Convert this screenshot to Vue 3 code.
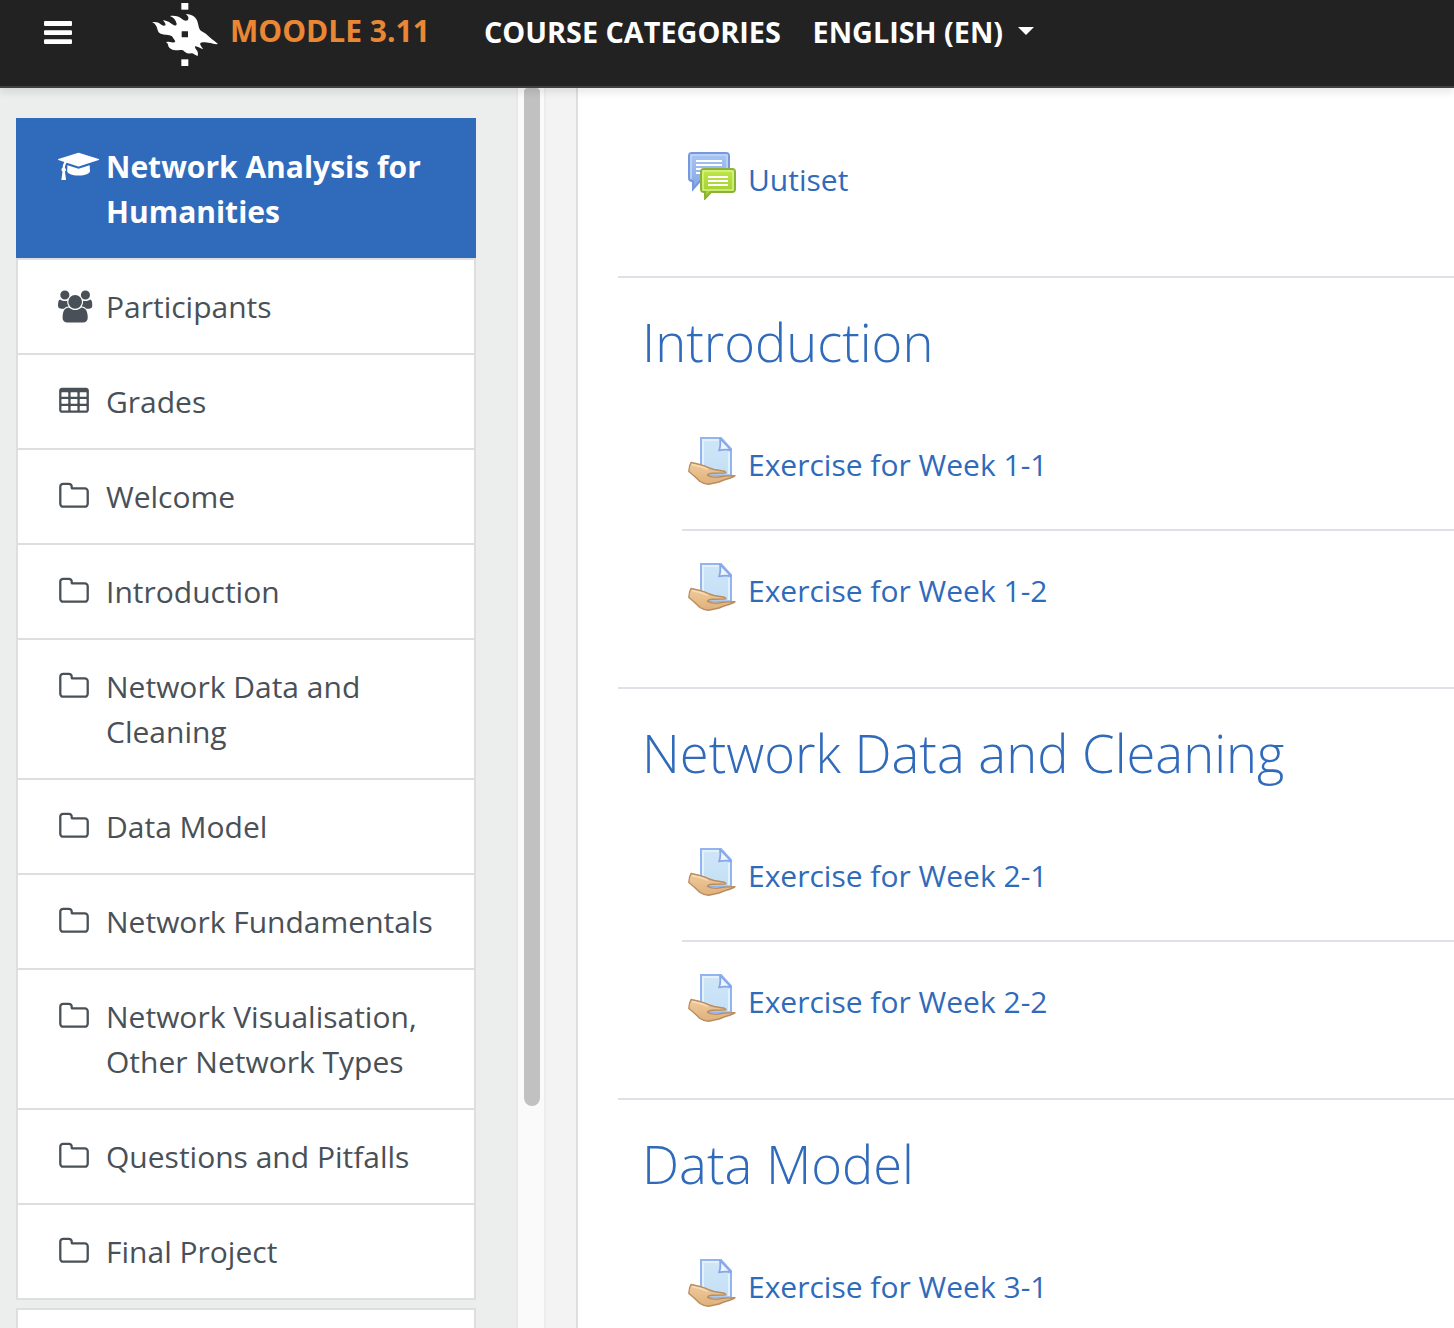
<script setup>
const icons = {
  cap: {
    box: '0 0 2304 1792',
    width: 41.14,
    path: 'M1774 836l18 316q4 69-82 128t-235 93.5-323 34.5-323-34.5-235-93.5-82-128l18-316 574 181q22 7 48 7t48-7zm530-324q0 23-22 31l-1120 352q-4 1-10 1t-10-1l-652-206q-43 34-71 111.5t-34 178.5q63 36 63 109 0 69-58 107l58 433q2 14-8 25-9 11-24 11h-192q-15 0-24-11-10-11-8-25l58-433q-58-38-58-107 0-73 65-111 11-207 98-330l-333-104q-22-8-22-31t22-31l1120-352q4-1 10-1t10 1l1120 352q22 8 22 31z',
  },
  users: {
    box: '64 0 1920 1792',
    width: 34.29,
    path: 'M657 896q-162 5-265 128h-134q-82 0-138-40.5t-56-118.5q0-353 124-353 6 0 43.5 21t97.5 42.5 119 21.5q67 0 133-23-5 37-5 66 0 139 81 256zm1071 637q0 120-73 189.5t-194 69.5h-874q-121 0-194-69.5t-73-189.5q0-53 3.5-103.5t14-109 26.5-108.5 43-97.5 62-81 85.5-53.5 111.5-20q10 0 43 21.5t73 48 107 48 135 21.5 135-21.5 107-48 73-48 43-21.5q61 0 111.5 20t85.5 53.5 62 81 43 97.5 26.5 108.5 14 109 3.5 103.5zm-1024-1277q0 106-75 181t-181 75-181-75-75-181 75-181 181-75 181 75 75 181zm704 384q0 159-112.5 271.5t-271.5 112.5-271.5-112.5-112.5-271.5 112.5-271.5 271.5-112.5 271.5 112.5 112.5 271.5zm576 225q0 78-56 118.5t-138 40.5h-134q-103-123-265-128 81-117 81-256 0-29-5-66 66 23 133 23 59 0 119-21.5t97.5-42.5 43.5-21q124 0 124 353zm-128-609q0 106-75 181t-181 75-181-75-75-181 75-181 181-75 181 75 75 181z',
  },
  table: {
    box: '0 0 1728 1792',
    width: 30.86,
    path: 'M224 128h1344q66 0 113 47t47 113v1088q0 66-47 113t-113 47h-1344q-66 0-113-47t-47-113v-1088q0-66 47-113t113-47z'
      + [192, 704, 1216].flatMap(x => [384, 768, 1152].map(y =>
        `M${x + 32} ${y}h320q32 0 32 32v192q0 32-32 32h-320q-32 0-32-32v-192q0-32 32-32z`)).join(''),
  },
  folder: {
    box: '0 0 1728 1792',
    width: 30.86,
    path: 'M1600 1312v-704q0-40-28-68t-68-28h-704q-40 0-68-28t-28-68v-64q0-40-28-68t-68-28h-320q-40 0-68 28t-28 68v960q0 40 28 68t68 28h1216q40 0 68-28t28-68zm128-704v704q0 92-66 158t-158 66h-1216q-92 0-158-66t-66-158v-960q0-92 66-158t158-66h320q92 0 158 66t66 158v32h672q92 0 158 66t66 158z',
  },
}

const nav = [
  { icon: 'cap', text: 'Network Analysis for Humanities', active: true },
  { icon: 'users', text: 'Participants' },
  { icon: 'table', text: 'Grades' },
  { icon: 'folder', text: 'Welcome' },
  { icon: 'folder', text: 'Introduction' },
  { icon: 'folder', text: 'Network Data and Cleaning' },
  { icon: 'folder', text: 'Data Model' },
  { icon: 'folder', text: 'Network Fundamentals' },
  { icon: 'folder', text: 'Network Visualisation, Other Network Types' },
  { icon: 'folder', text: 'Questions and Pitfalls' },
  { icon: 'folder', text: 'Final Project' },
]

const sections = [
  { title: 'Introduction', items: ['Exercise for Week 1-1', 'Exercise for Week 1-2'] },
  { title: 'Network Data and Cleaning', items: ['Exercise for Week 2-1', 'Exercise for Week 2-2'] },
  { title: 'Data Model', items: ['Exercise for Week 3-1'] },
]
</script>

<template>
  <div class="page">
    <svg class="defs" width="0" height="0" aria-hidden="true">
      <linearGradient id="paper" x1="0" y1="0" x2="0" y2="1">
        <stop offset="0" stop-color="#d0e6f6" /><stop offset="1" stop-color="#c3dff7" />
      </linearGradient>
      <linearGradient id="skin" x1="0" y1="0" x2="0" y2="1">
        <stop offset="0" stop-color="#f0cb9c" /><stop offset="1" stop-color="#dfb07b" />
      </linearGradient>
      <linearGradient id="blue" x1="0" y1="0" x2="0" y2="1">
        <stop offset="0" stop-color="#a9c6f3" /><stop offset="1" stop-color="#86a5e6" />
      </linearGradient>
      <linearGradient id="green" x1="0" y1="0" x2="0" y2="1">
        <stop offset="0" stop-color="#c0e64c" /><stop offset="1" stop-color="#9ccb26" />
      </linearGradient>
    </svg>

    <header class="topbar">
      <svg class="bars" width="28" height="24" viewBox="0 0 28 24">
        <rect y="0" width="28" height="5" rx="1.1" /><rect y="9.2" width="28" height="4.8" rx="1.1" /><rect y="18.3" width="28" height="4.8" rx="1.1" />
      </svg>
      <svg class="logo" width="90" height="72" viewBox="0 0 270 216">
        <path fill-rule="evenodd" d="M36 67C46 65 55 66 62 73Q68 79 77 76Q76 68 69 61C84 62 92 70 102 76Q110 79 110 71C107 59 100 52 90 48C106 46 118 50 125 56Q135 65 143 61C148 54 145 48 137 42C158 42 170 54 173 67C177 82 176 90 190 97C201 103 208 111 216 118Q225 124 234 132C224 134 215 129 206 128Q197 126 190 127Q181 126 180 132Q184 141 190 148C181 146 173 138 165 139Q164 144 169 149Q176 156 173 168C163 165 162 160 153 160Q144 163 134 155C126 148 123 151 115 151C98 152 88 146 85 138Q85 131 78 126Q87 124 95 127Q104 129 106 124Q102 118 96 109Q89 104 79 104C65 105 56 101 53 91C51 81 47 71 36 67ZM125 94V112H144V94Z" />
        <rect x="124" y="9" width="21" height="20" /><rect x="124" y="178" width="21" height="20" />
      </svg>
      <span class="brand">MOODLE 3.11</span>
      <span class="menu categories">COURSE CATEGORIES</span>
      <span class="menu">ENGLISH (EN)</span>
      <span class="caret"></span>
    </header>

    <div class="body">
      <aside class="drawer">
        <nav class="list">
          <a v-for="item in nav" :key="item.text" class="entry" :class="{ active: item.active }">
            <span class="glyph">
              <svg :width="icons[item.icon].width" height="32" :viewBox="icons[item.icon].box">
                <path fill-rule="evenodd" :d="icons[item.icon].path" />
              </svg>
            </span>
            <span class="label">{{ item.text }}</span>
          </a>
        </nav>
        <nav class="list second"><a class="entry"></a></nav>
      </aside>
      <div class="track"><div class="thumb"></div></div>
      <div class="gutter"></div>

      <main class="content">
        <div class="activity news">
          <svg class="act-icon" width="48" height="48" viewBox="0 0 48 48">
            <path d="M4 1H38Q41 1 41 4V26Q41 29 38 29H12L5 37V29H4Q1 29 1 26V4Q1 1 4 1Z" fill="url(#blue)" stroke="#7797df" stroke-width="2" />
            <path d="M3 27V3H39V27" fill="none" stroke="#bcd8f7" stroke-width="1.6" />
            <path d="M8 9H34M8 13H34M8 17H34M8 21H34" stroke="#fff" stroke-width="2" />
            <path d="M16 17H44Q47 17 47 20V37Q47 40 44 40H23L17 46.500V40H16Q13 40 13 37V20Q13 17 16 17Z" fill="url(#green)" stroke="#8ab236" stroke-width="2" />
            <path d="M15 38V19H45V38Z" fill="none" stroke="#d8f28a" stroke-width="1.5" />
            <path d="M20 25H40M20 29H40M20 33H40" stroke="#fff" stroke-width="2" />
          </svg>
          <a>Uutiset</a>
        </div>
        <section v-for="s in sections" :key="s.title" class="section">
          <h3>{{ s.title }}</h3>
          <ul>
            <li v-for="name in s.items" :key="name" class="activity">
              <svg class="act-icon" width="48" height="48" viewBox="0 0 48 48">
                <path d="M13 1H33L43 12V38.500H13Z" fill="url(#paper)" stroke="#93b5ee" stroke-width="2" />
                <path d="M15 37V3H31M41 15V37" fill="none" stroke="#e3f0fd" stroke-width="2" />
                <path d="M32 1.500Q33 9 31 13.500Q36 12 43 13Z" fill="#eef5fe" stroke="#86a6ea" stroke-width="1.8" stroke-linejoin="round" />
                <path d="M3 25.500Q10 27 16.500 28.800Q22 31.500 26 32.500L36.500 34.300Q39 35.500 37 36L25 36.200Q20 36.500 19.500 38.300Q23 40.300 28.500 40.300Q37 38.500 47 38.600Q45 40.300 39 42Q35.500 43 31 45Q25 46.500 20.500 47.300Q15.500 47 12 44.500Q6 38.500 .8 34.500Q1 29 3 25.500Z" fill="url(#skin)" stroke="#b98d60" stroke-width="1.4" stroke-linejoin="round" />
                <path d="M4 27.500Q13 29 20 32.500" fill="none" stroke="#f8dcb5" stroke-width="1.3" />
              </svg>
              <a>{{ name }}</a>
            </li>
          </ul>
        </section>
      </main>
    </div>
  </div>
</template>

<style>
body {
  margin: 0;
  overflow: hidden;
}
</style>

<style scoped>
.page {
  display: flex;
  flex-direction: column;
  height: 1328px;
  overflow: hidden;
  font: 400 30px/45px "Open Sans", "Noto Sans", sans-serif;
  background: #f3f3f3;
}
.defs { position: absolute; }
.topbar {
  position: relative;
  z-index: 5;
  display: flex;
  align-items: flex-start;
  flex: none;
  box-sizing: border-box;
  height: 88px;
  background: #222;
  border-bottom: 2px solid #404040;
  box-shadow: 0 4px 8px rgba(0, 0, 0, .1);
  color: #fff;
  font-weight: 700;
  font-size: 28.800px;
  white-space: nowrap;
}
.topbar svg { flex: none; fill: #fff; }
.bars { margin: 21px 68px 0 44px; }
.brand {
  width: 254px;
  margin-top: 8px;
  color: #ea8734;
  font-size: 30px;
}
.menu { margin-top: 9px; }
.categories { width: 328.500px; }
.caret {
  margin: 27px 0 0 15px;
  border: 8.5px solid transparent;
  border-top-color: #fff;
  border-bottom: 0;
}
.body {
  display: flex;
  flex: 1;
  min-height: 0;
}
.drawer {
  box-sizing: border-box;
  flex: none;
  width: 518px;
  padding: 30px 40px 0 16px;
  background: #eceeed;
  border-right: 2px solid #e8e8e8;
}
.list { display: flex; flex-direction: column; }
.second { margin-top: 8px; }
.entry {
  display: flex;
  box-sizing: border-box;
  min-height: 97px;
  margin-bottom: -2px;
  padding: 24px 36px 24px 40px;
  border: 2px solid #dedede;
  background: #fff;
  color: #495057;
}
.entry:last-child { margin-bottom: 0; }
.entry.active {
  margin-bottom: 0;
  border-color: #306abb;
  border-bottom: 0;
  background: #306abb;
  color: #fff;
  font-weight: 700;
}
.glyph { flex: none; width: 48px; padding-top: 6px; line-height: 0; fill: currentColor; }
.glyph svg { overflow: visible; transform: translateY(.4px); }
.label { flex: 1; margin-right: -20px; }
.track {
  flex: none;
  box-sizing: border-box;
  width: 28px;
  padding-left: 6px;
  background: #fafafa;
  border-right: 2px solid #ededed;
}
.thumb {
  width: 16px;
  height: 1018px;
  background: #c1c1c1;
  border-radius: 4px 4px 8px 8px;
}
.gutter { flex: none; width: 30px; background: #f3f3f3; }
.content {
  flex: 1;
  padding-left: 40px;
  background: #fff;
  border-left: 2px solid #dedede;
  color: #306abb;
  white-space: nowrap;
}
.activity {
  display: flex;
  box-sizing: border-box;
  height: 126px;
  padding: 32px 0 0 6px;
}
.activity:first-child { height: 124px; }
.act-icon { flex: none; margin-right: 12px; }
.activity a { margin-top: 5px; }
.activity.news {
  height: 188px;
  padding: 64px 0 0 70px;
}
.section {
  box-sizing: border-box;
  height: 411px;
  border-top: 2px solid #dee2e6;
  overflow: hidden;
}
h3 {
  margin: 32px 0 0 24px;
  font-size: 52.500px;
  line-height: 63px;
  font-weight: 300;
}
ul { margin: 32px 0 0 64px; padding: 0; list-style: none; }
li + li { border-top: 2px solid #dee2e6; }
</style>
